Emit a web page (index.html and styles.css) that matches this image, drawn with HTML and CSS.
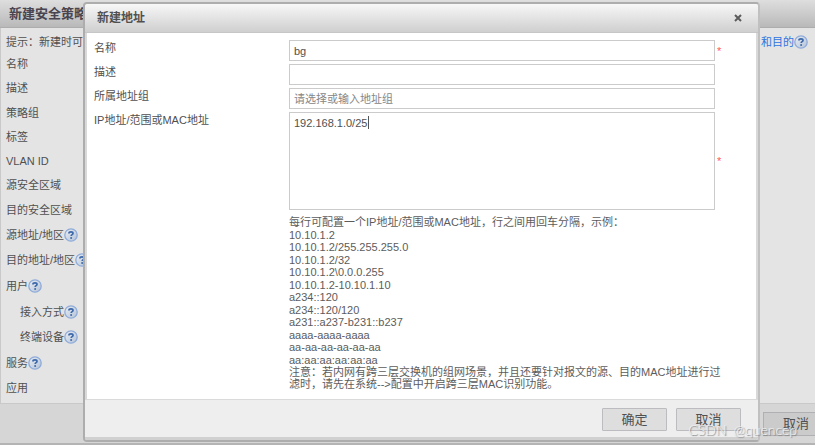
FILE: index.html
```html
<!DOCTYPE html>
<html lang="zh-CN">
<head>
<meta charset="utf-8">
<title>新建地址</title>
<link rel="stylesheet" href="styles.css">
</head>
<body>
<svg class="defs" aria-hidden="true">
  <defs>
    <linearGradient id="disc" x1="0" y1="0" x2="1" y2="1">
      <stop offset="0" stop-color="#e9edf2"/>
      <stop offset="1" stop-color="#b4c3d8"/>
    </linearGradient>
    <symbol id="help" viewBox="0 0 14 14">
      <circle cx="7" cy="7" r="6.2" fill="url(#disc)" stroke="#8eabda" stroke-width="1.3"/>
      <path d="M4.900 5.500C5 4.300 5.900 3.900 7 3.900c1.300 0 2 .6 2 1.500 0 1.300-1.800 1.200-1.800 2.500" fill="none" stroke="#3c69ab" stroke-width="1.7"/>
      <circle cx="7.100" cy="9.900" r="1" fill="#3c69ab"/>
    </symbol>
  </defs>
</svg>

<div class="policy">
  <header class="policy-title">新建安全策略</header>
  <main class="policy-body">
    <p class="hint"><span>提示：新建时可</span><a href="#">和目的<svg class="help"><use href="#help"/></svg></a></p>
    <ul class="fields">
      <li>名称</li>
      <li>描述</li>
      <li>策略组</li>
      <li>标签</li>
      <li>VLAN ID</li>
      <li>源安全区域</li>
      <li>目的安全区域</li>
      <li class="tall">源地址/地区<svg class="help"><use href="#help"/></svg></li>
      <li class="tall">目的地址/地区<svg class="help"><use href="#help"/></svg></li>
      <li class="tall">用户<svg class="help"><use href="#help"/></svg></li>
      <li class="tall sub">接入方式<svg class="help"><use href="#help"/></svg></li>
      <li class="tall sub">终端设备<svg class="help"><use href="#help"/></svg></li>
      <li class="tall">服务<svg class="help"><use href="#help"/></svg></li>
      <li>应用</li>
    </ul>
  </main>
  <footer class="policy-footer"><button type="button">取消</button></footer>
</div>

<form class="dialog" role="dialog" aria-labelledby="dialog-title">
  <header class="dialog-title">
    <span id="dialog-title">新建地址</span>
    <button type="button" class="close" aria-label="关闭"><svg viewBox="0 0 8 8"><path d="M1 1l6 6M7 1L1 7"/></svg></button>
  </header>
  <div class="dialog-body">
    <div class="row">
      <label for="name">名称</label>
      <input id="name" type="text" value="bg">
      <span class="required">*</span>
    </div>
    <div class="row">
      <label for="desc">描述</label>
      <input id="desc" type="text">
    </div>
    <div class="row">
      <label for="group">所属地址组</label>
      <input id="group" type="text" placeholder="请选择或输入地址组">
    </div>
    <div class="row">
      <label for="ip">IP地址/范围或MAC地址</label>
      <div class="area"><textarea id="ip">192.168.1.0/25</textarea><i class="caret"></i></div>
      <span class="required">*</span>
    </div>
    <div class="help-text">
      <p>每行可配置一个IP地址/范围或MAC地址，行之间用回车分隔，示例：</p>
      <p>10.10.1.2</p>
      <p>10.10.1.2/255.255.255.0</p>
      <p>10.10.1.2/32</p>
      <p>10.10.1.2\0.0.0.255</p>
      <p>10.10.1.2-10.10.1.10</p>
      <p>a234::120</p>
      <p>a234::120/120</p>
      <p>a231::a237-b231::b237</p>
      <p>aaaa-aaaa-aaaa</p>
      <p>aa-aa-aa-aa-aa-aa</p>
      <p>aa:aa:aa:aa:aa:aa</p>
      <p>注意：若内网有跨三层交换机的组网场景，并且还要针对报文的源、目的MAC地址进行过滤时，请先在系统--&gt;配置中开启跨三层MAC识别功能。</p>
    </div>
  </div>
  <footer class="dialog-footer">
    <button type="submit">确定</button>
    <button type="button">取消</button>
  </footer>
</form>
<div class="watermark"><span>CSDN</span><span>@quencep</span></div>
</body>
</html>
```
FILE: styles.css
```css
* {
  box-sizing: border-box;
}

body {
  position: relative;
  min-height: 100vh;
  margin: 0;
  display: flex;
  overflow: hidden;
  color: #505050;
  font: 11px/12px "Liberation Sans", "Noto Sans CJK SC", sans-serif;
}

p,
ul {
  margin: 0;
  padding: 0;
  list-style: none;
}

button,
input,
textarea {
  font: inherit;
  color: inherit;
}

.defs {
  position: absolute;
  width: 0;
  height: 0;
}

.help {
  flex: none;
  width: 14px;
  height: 14px;
}

/* Policy window behind the dialog */
.policy {
  flex: 1;
  display: flex;
  flex-direction: column;
  background: #d6d6d6;
  border-bottom: 2px solid #b4b4b4;
}

.policy-title {
  height: 28px;
  padding: 0 9px;
  border-bottom: 1px solid #adadad;
  background: linear-gradient(#dedede, #b9b9b9);
  color: #484450;
  font-size: 13px;
  font-weight: 700;
  line-height: 28px;
}

.policy-body {
  flex: 1;
  display: flex;
  flex-direction: column;
  padding: 3px 7px 3px 5px;
  border: solid #c9c9c9;
  border-width: 0 0 1px 1px;
  background: #e4e4e4;
}

.hint,
.hint a {
  display: flex;
  align-items: center;
}

.hint {
  justify-content: space-between;
  height: 21px;
}

.hint a {
  color: #2f74e0;
  text-decoration: none;
}

.fields {
  flex: 1;
  display: flex;
  flex-direction: column;
}

.fields li {
  flex: 17 1 0;
  display: flex;
  align-items: center;
}

.fields .tall {
  flex-grow: 18;
}

.fields .sub {
  padding-left: 14px;
}

.policy-footer {
  display: flex;
  justify-content: flex-end;
  height: 39px;
  padding-top: 8px;
}

.policy-footer button {
  width: 66px;
  height: 24px;
  margin-right: -14px;
  border: 1px solid #b0b0b4;
  background: #cbcbcb;
  font-size: 13px;
}

/* Address dialog */
.dialog {
  position: absolute;
  inset: 2px 55px 3px 83px;
  display: flex;
  flex-direction: column;
  border: 2px solid #adadad;
  border-right-color: #c0c0c0;
  border-radius: 4px;
  background: #d9d9d9;
  overflow: hidden;
}

.dialog-title {
  display: flex;
  align-items: center;
  justify-content: space-between;
  height: 29px;
  padding: 0 16px 0 12px;
  border-bottom: 1px solid #c6c6c6;
  background: linear-gradient(#f7f7f7, #cfcfcf);
  color: #505050;
  font-size: 12px;
  font-weight: 700;
}

.close {
  display: flex;
  padding: 0;
  border: 0;
  background: none;
}

.close svg {
  width: 8px;
  height: 8px;
  fill: none;
  stroke: #5c5c5c;
  stroke-width: 2;
}

.dialog-body {
  flex: 1;
  display: flex;
  flex-direction: column;
  gap: 3px;
  margin: 0 2px;
  padding: 7px 25px 9px 7px;
  background: #fff;
}

.row {
  display: grid;
  grid-template-columns: 193px 1fr 14px;
  column-gap: 2px;
  align-items: center;
}

.row label {
  align-self: start;
  padding-top: 2px;
}

.row input,
.row textarea {
  width: 100%;
  border: 1px solid #cbcbcb;
  background: #fff;
  outline: none;
}

.row input {
  height: 21px;
  padding: 0 4px;
}

.row ::placeholder {
  color: #868686;
  opacity: 1;
}

.area {
  position: relative;
  display: flex;
}

.row textarea {
  height: 98px;
  padding: 4px;
  resize: none;
}

.caret {
  position: absolute;
  top: 4px;
  left: 79px;
  width: 1px;
  height: 13px;
  background: #555;
}

.required {
  color: #ff5a5a;
}

.help-text {
  flex: 1;
  display: flex;
  flex-direction: column;
  justify-content: space-between;
  margin: 3px 0 0 195px;
  color: #5c5c5c;
}

.dialog-footer {
  display: flex;
  justify-content: flex-end;
  gap: 9px;
  height: 41px;
  padding: 8px 17px;
  border-top: 1px solid #dadada;
  border-bottom: 3px solid #d0d0d0;
  background: #eee;
}

.dialog-footer button {
  width: 65px;
  height: 23px;
  padding: 0;
  border: 1px solid #bbbbc0;
  border-radius: 1px;
  background: #dedede;
  font-size: 13px;
}

.watermark {
  position: absolute;
  right: 18px;
  bottom: 7px;
  display: flex;
  gap: 7px;
  color: #f4f4f4;
  font: 300 14px/16px Lato, sans-serif;
  text-shadow: 1px 1px 1px #777;
}
```
